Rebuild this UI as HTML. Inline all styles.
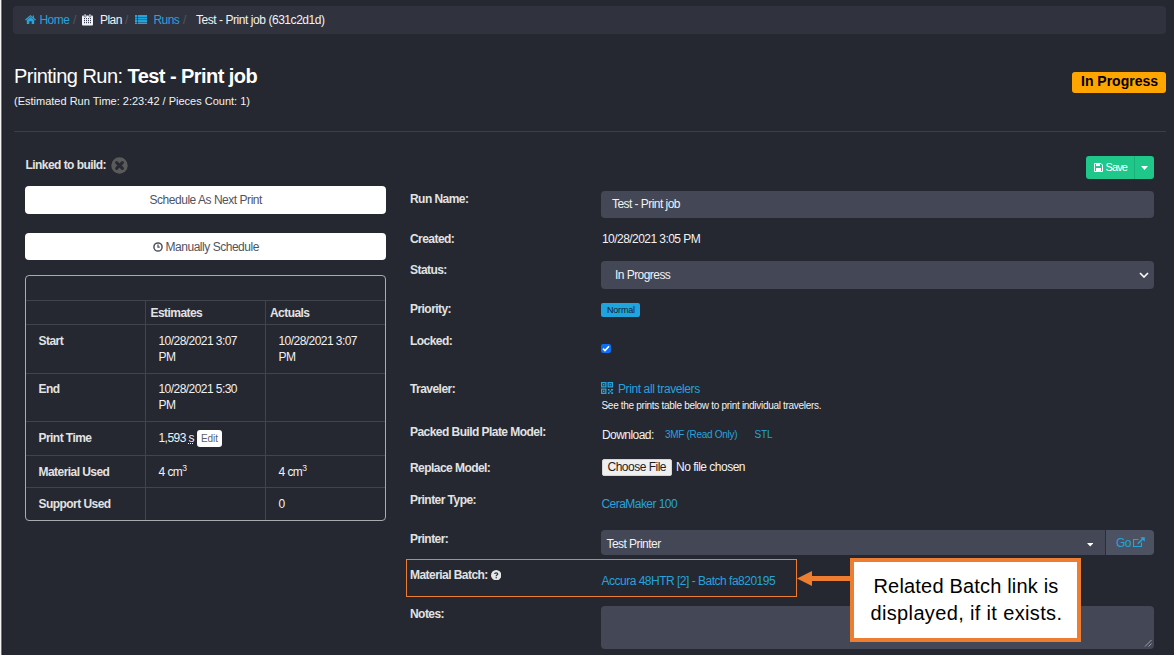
<!DOCTYPE html>
<html><head><meta charset="utf-8"><style>
html,body{margin:0;padding:0;width:1174px;height:655px;overflow:hidden;background:#252831;}
body{position:relative;font-family:"Liberation Sans", sans-serif;}
.t{position:absolute;white-space:nowrap;font-family:"Liberation Sans", sans-serif;}
.r{position:absolute;}
sup{font-size:8.5px;line-height:0;vertical-align:5px;letter-spacing:0;}
b{font-weight:bold;}
</style></head><body>
<div class="r" style="left:0px;top:0px;width:1px;height:655px;background:#f4f4f4;"></div>
<div class="r" style="left:1px;top:0px;width:1px;height:655px;background:#74767c;"></div>
<div class="r" style="left:2px;top:0px;width:1px;height:655px;background:#1f2129;"></div>
<div class="r" style="left:13px;top:6px;width:1153px;height:28px;background:#30333e;border-radius:4px"></div>
<svg class="r" style="left:25px;top:15px" width="11" height="9" viewBox="0 0 11 9"><path d="M5.5 0 L0 4.6 L0.8 5.4 L5.5 1.5 L10.2 5.4 L11 4.6 L9 2.9 L9 0.6 L7.8 0.6 L7.8 1.9 Z M1.8 5 L1.8 9 L4.3 9 L4.3 6.3 L6.7 6.3 L6.7 9 L9.2 9 L9.2 5 L5.5 2 Z" fill="#25a3db"/></svg>
<div class="t" style="left:39.5px;top:14px;font-size:12px;line-height:12px;font-weight:normal;color:#25a3db;letter-spacing:-0.55px;">Home</div>
<div class="t" style="left:73px;top:14px;font-size:12px;line-height:12px;font-weight:normal;color:#50535e;letter-spacing:0px;">/</div>
<svg class="r" style="left:82px;top:14px" width="11" height="11.5" viewBox="0 0 11 11.5"><rect x="0" y="1.6" width="11" height="9.9" rx="1" fill="#f4f4f8"/><g fill="#3b3f52"><rect x="2" y="4" width="1" height="1.2"/><rect x="4" y="4" width="1" height="1.2"/><rect x="6" y="4" width="1" height="1.2"/><rect x="8" y="4" width="1" height="1.2"/><rect x="2" y="6" width="1" height="1.2"/><rect x="4" y="6" width="1" height="1.2"/><rect x="6" y="6" width="1" height="1.2"/><rect x="8" y="6" width="1" height="1.2"/><rect x="2" y="8" width="1" height="1.2"/><rect x="4" y="8" width="1" height="1.2"/><rect x="6" y="8" width="1" height="1.2"/><rect x="8" y="8" width="1" height="1.2"/></g><rect x="2.2" y="0" width="1.8" height="3" rx="0.6" fill="#f4f4f8" stroke="#30333e" stroke-width="0.6"/><rect x="7" y="0" width="1.8" height="3" rx="0.6" fill="#f4f4f8" stroke="#30333e" stroke-width="0.6"/></svg>
<div class="t" style="left:100px;top:14px;font-size:12px;line-height:12px;font-weight:normal;color:#f2f2f2;letter-spacing:-0.55px;">Plan</div>
<div class="t" style="left:125px;top:14px;font-size:12px;line-height:12px;font-weight:normal;color:#50535e;letter-spacing:0px;">/</div>
<svg class="r" style="left:135px;top:14.5px" width="12" height="9.6" viewBox="0 0 12 9.6"><g fill="#25a3db"><rect x="0" y="0" width="2.2" height="2.1"/><rect x="3" y="0" width="9" height="2.1"/><rect x="0" y="2.5" width="2.2" height="2.1"/><rect x="3" y="2.5" width="9" height="2.1"/><rect x="0" y="5" width="2.2" height="2.1"/><rect x="3" y="5" width="9" height="2.1"/><rect x="0" y="7.5" width="2.2" height="2.1"/><rect x="3" y="7.5" width="9" height="2.1"/></g></svg>
<div class="t" style="left:153.5px;top:14px;font-size:12px;line-height:12px;font-weight:normal;color:#25a3db;letter-spacing:-0.55px;">Runs</div>
<div class="t" style="left:183px;top:14px;font-size:12px;line-height:12px;font-weight:normal;color:#50535e;letter-spacing:0px;">/</div>
<div class="t" style="left:196px;top:14px;font-size:12px;line-height:12px;font-weight:normal;color:#f2f2f2;letter-spacing:-0.45px;">Test - Print job (631c2d1d)</div>
<div class="t" style="left:14px;top:66px;font-size:20px;line-height:20px;font-weight:normal;color:#ffffff;letter-spacing:-0.55px;">Printing Run: <b>Test - Print job</b></div>
<div class="t" style="left:14px;top:96px;font-size:11px;line-height:11px;font-weight:normal;color:#f2f2f2;letter-spacing:0px;">(Estimated Run Time: 2:23:42 / Pieces Count: 1)</div>
<div class="r" style="left:1072px;top:72px;width:94px;height:21px;background:#ffa500;border-radius:3px"></div>
<div class="t" style="left:1081px;top:74px;font-size:14px;line-height:14px;font-weight:bold;color:#000;letter-spacing:0px;">In Progress</div>
<div class="r" style="left:14px;top:131px;width:1152px;height:1px;background:#3b3e49;"></div>
<div class="t" style="left:25.5px;top:159px;font-size:12px;line-height:12px;font-weight:bold;color:#e2e2e2;letter-spacing:-0.55px;">Linked to build:</div>
<svg class="r" style="left:111px;top:156.5px" width="17" height="17" viewBox="0 0 17 17"><circle cx="8.5" cy="8.5" r="8.2" fill="#5a5a5a"/><path d="M5.6 5.6 L11.4 11.4 M11.4 5.6 L5.6 11.4" stroke="#272a33" stroke-width="3" stroke-linecap="round"/></svg>
<div class="r" style="left:25px;top:186px;width:361px;height:28px;background:#ffffff;border-radius:4px"></div>
<div class="t" style="left:149.5px;top:194px;font-size:12px;line-height:12px;font-weight:normal;color:#50545f;letter-spacing:-0.47px;">Schedule As Next Print</div>
<div class="r" style="left:25px;top:233px;width:361px;height:27px;background:#ffffff;border-radius:4px"></div>
<svg class="r" style="left:153px;top:241.5px" width="10" height="10" viewBox="0 0 10 10"><circle cx="5" cy="5" r="4.1" fill="none" stroke="#50545f" stroke-width="1.5"/><path d="M5 2.6 V5.2 H6.8" fill="none" stroke="#50545f" stroke-width="1.3"/></svg>
<div class="t" style="left:165.5px;top:241px;font-size:12px;line-height:12px;font-weight:normal;color:#50545f;letter-spacing:-0.47px;">Manually Schedule</div>
<div class="r" style="left:25px;top:275px;width:361px;height:246px;background:none;border:1px solid #a9abb0;border-radius:4px;box-sizing:border-box"></div>
<div class="r" style="left:26px;top:300px;width:359px;height:1px;background:#41444f;"></div>
<div class="r" style="left:26px;top:324px;width:359px;height:1px;background:#41444f;"></div>
<div class="r" style="left:26px;top:373px;width:359px;height:1px;background:#41444f;"></div>
<div class="r" style="left:26px;top:421px;width:359px;height:1px;background:#41444f;"></div>
<div class="r" style="left:26px;top:455px;width:359px;height:1px;background:#41444f;"></div>
<div class="r" style="left:26px;top:487px;width:359px;height:1px;background:#41444f;"></div>
<div class="r" style="left:145px;top:300px;width:1px;height:220px;background:#41444f;"></div>
<div class="r" style="left:265px;top:300px;width:1px;height:220px;background:#41444f;"></div>
<div class="t" style="left:150.5px;top:307px;font-size:12px;line-height:12px;font-weight:bold;color:#e2e2e2;letter-spacing:-0.55px;">Estimates</div>
<div class="t" style="left:270px;top:307px;font-size:12px;line-height:12px;font-weight:bold;color:#e2e2e2;letter-spacing:-0.55px;">Actuals</div>
<div class="t" style="left:38.5px;top:335px;font-size:12px;line-height:12px;font-weight:bold;color:#e2e2e2;letter-spacing:-0.55px;">Start</div>
<div class="t" style="left:158.5px;top:334px;font-size:12px;line-height:12px;font-weight:normal;color:#f2f2f2;letter-spacing:-0.55px;line-height:15.5px">10/28/2021 3:07<br>PM</div>
<div class="t" style="left:278.5px;top:334px;font-size:12px;line-height:12px;font-weight:normal;color:#f2f2f2;letter-spacing:-0.55px;line-height:15.5px">10/28/2021 3:07<br>PM</div>
<div class="t" style="left:38.5px;top:383px;font-size:12px;line-height:12px;font-weight:bold;color:#e2e2e2;letter-spacing:-0.55px;">End</div>
<div class="t" style="left:158.5px;top:382px;font-size:12px;line-height:12px;font-weight:normal;color:#f2f2f2;letter-spacing:-0.55px;line-height:15.5px">10/28/2021 5:30<br>PM</div>
<div class="t" style="left:38.5px;top:432px;font-size:12px;line-height:12px;font-weight:bold;color:#e2e2e2;letter-spacing:-0.55px;">Print Time</div>
<div class="t" style="left:38.5px;top:466px;font-size:12px;line-height:12px;font-weight:bold;color:#e2e2e2;letter-spacing:-0.55px;">Material Used</div>
<div class="t" style="left:158.5px;top:466px;font-size:12px;line-height:12px;font-weight:normal;color:#f2f2f2;letter-spacing:-0.55px;">4 cm<sup>3</sup></div>
<div class="t" style="left:278.5px;top:466px;font-size:12px;line-height:12px;font-weight:normal;color:#f2f2f2;letter-spacing:-0.55px;">4 cm<sup>3</sup></div>
<div class="t" style="left:38.5px;top:498px;font-size:12px;line-height:12px;font-weight:bold;color:#e2e2e2;letter-spacing:-0.55px;">Support Used</div>
<div class="t" style="left:278.5px;top:498px;font-size:12px;line-height:12px;font-weight:normal;color:#f2f2f2;letter-spacing:-0.55px;">0</div>
<div class="t" style="left:158.5px;top:432px;font-size:12px;line-height:12px;font-weight:normal;color:#f2f2f2;letter-spacing:-0.55px;">1,593 <span style="text-decoration:underline dotted;">s</span></div>
<div class="r" style="left:197px;top:430px;width:25px;height:17px;background:#ffffff;border-radius:3px"></div>
<div class="t" style="left:201px;top:434px;font-size:10px;line-height:10px;font-weight:normal;color:#5b5e66;letter-spacing:-0.1px;">Edit</div>
<div class="r" style="left:1086px;top:156px;width:68px;height:23px;background:#1fc78a;border-radius:3px"></div>
<div class="r" style="left:1134px;top:156px;width:1px;height:23px;background:#1ab07a;"></div>
<svg class="r" style="left:1094px;top:163px" width="9" height="9" viewBox="0 0 9 9"><path d="M0.5 0.5 H7 L8.5 2 V8.5 H0.5 Z" fill="none" stroke="#fff" stroke-width="1"/><rect x="2" y="0.5" width="4" height="2.6" fill="#fff"/><rect x="2" y="5" width="5" height="3.5" fill="#fff"/></svg>
<div class="t" style="left:1105.5px;top:162px;font-size:11px;line-height:11px;font-weight:normal;color:#fff;letter-spacing:-0.9px;">Save</div>
<svg class="r" style="left:1141px;top:165.5px" width="7" height="4" viewBox="0 0 7 4"><path d="M0 0 H7 L3.5 4 Z" fill="#fff"/></svg>
<div class="t" style="left:410px;top:193px;font-size:12px;line-height:12px;font-weight:bold;color:#e2e2e2;letter-spacing:-0.55px;">Run Name:</div>
<div class="t" style="left:410px;top:233px;font-size:12px;line-height:12px;font-weight:bold;color:#e2e2e2;letter-spacing:-0.55px;">Created:</div>
<div class="t" style="left:410px;top:264px;font-size:12px;line-height:12px;font-weight:bold;color:#e2e2e2;letter-spacing:-0.55px;">Status:</div>
<div class="t" style="left:410px;top:303px;font-size:12px;line-height:12px;font-weight:bold;color:#e2e2e2;letter-spacing:-0.55px;">Priority:</div>
<div class="t" style="left:410px;top:335px;font-size:12px;line-height:12px;font-weight:bold;color:#e2e2e2;letter-spacing:-0.55px;">Locked:</div>
<div class="t" style="left:410px;top:383px;font-size:12px;line-height:12px;font-weight:bold;color:#e2e2e2;letter-spacing:-0.55px;">Traveler:</div>
<div class="t" style="left:410px;top:426px;font-size:12px;line-height:12px;font-weight:bold;color:#e2e2e2;letter-spacing:-0.55px;">Packed Build Plate Model:</div>
<div class="t" style="left:410px;top:462px;font-size:12px;line-height:12px;font-weight:bold;color:#e2e2e2;letter-spacing:-0.55px;">Replace Model:</div>
<div class="t" style="left:410px;top:494px;font-size:12px;line-height:12px;font-weight:bold;color:#e2e2e2;letter-spacing:-0.55px;">Printer Type:</div>
<div class="t" style="left:410px;top:533px;font-size:12px;line-height:12px;font-weight:bold;color:#e2e2e2;letter-spacing:-0.55px;">Printer:</div>
<div class="t" style="left:410px;top:569px;font-size:12px;line-height:12px;font-weight:bold;color:#e2e2e2;letter-spacing:-0.55px;">Material Batch:</div>
<div class="t" style="left:410px;top:608px;font-size:12px;line-height:12px;font-weight:bold;color:#e2e2e2;letter-spacing:-0.55px;">Notes:</div>
<svg class="r" style="left:491px;top:569.5px" width="10.4" height="10.4" viewBox="0 0 10.4 10.4"><circle cx="5.2" cy="5.2" r="5.2" fill="#e6e6e8"/><path d="M3.7 4 C3.7 2.4 6.7 2.4 6.7 4 C6.7 5.1 5.2 5 5.2 6.2" fill="none" stroke="#30333c" stroke-width="1.3"/><circle cx="5.2" cy="7.7" r="0.75" fill="#30333c"/></svg>
<div class="r" style="left:601px;top:191px;width:553px;height:27px;background:#434756;border-radius:4px"></div>
<div class="t" style="left:612px;top:198px;font-size:12px;line-height:12px;font-weight:normal;color:#f2f2f2;letter-spacing:-0.55px;">Test - Print job</div>
<div class="t" style="left:602px;top:233px;font-size:12px;line-height:12px;font-weight:normal;color:#f2f2f2;letter-spacing:-0.55px;">10/28/2021 3:05 PM</div>
<div class="r" style="left:601px;top:261px;width:553px;height:28px;background:#434756;border-radius:4px"></div>
<div class="t" style="left:615px;top:269px;font-size:12px;line-height:12px;font-weight:normal;color:#f2f2f2;letter-spacing:-0.55px;">In Progress</div>
<svg class="r" style="left:1139px;top:272px" width="10" height="6" viewBox="0 0 10 6"><path d="M1 1 L5 5 L9 1" fill="none" stroke="#fff" stroke-width="1.6"/></svg>
<div class="r" style="left:601px;top:303px;width:39px;height:14px;background:#1ea5dd;border-radius:2px"></div>
<div class="t" style="left:607px;top:306px;font-size:9px;line-height:9px;font-weight:normal;color:#141c2a;letter-spacing:-0.2px;">Normal</div>
<div class="r" style="left:601px;top:344px;width:10px;height:9px;background:#0e6ef4;border-radius:2px"></div>
<svg class="r" style="left:602px;top:345px" width="8" height="7" viewBox="0 0 8 7"><path d="M1 3.6 L3 5.6 L7 1.2" fill="none" stroke="#fff" stroke-width="1.6"/></svg>
<svg class="r" style="left:601px;top:382px" width="12" height="12" viewBox="0 0 12 12"><g fill="none" stroke="#25a3db" stroke-width="1.3"><rect x="0.65" y="0.65" width="4.2" height="4.2"/><rect x="7.15" y="0.65" width="4.2" height="4.2"/><rect x="0.65" y="7.15" width="4.2" height="4.2"/></g><g fill="#25a3db"><rect x="2" y="2" width="1.5" height="1.5"/><rect x="8.5" y="2" width="1.5" height="1.5"/><rect x="2" y="8.5" width="1.5" height="1.5"/><rect x="7" y="7" width="1.6" height="1.6"/><rect x="10" y="7" width="2" height="1.6"/><rect x="8.6" y="8.6" width="1.6" height="1.6"/><rect x="7" y="10.2" width="1.6" height="1.8"/><rect x="10.2" y="10.2" width="1.8" height="1.8"/></g></svg>
<div class="t" style="left:618px;top:383px;font-size:12px;line-height:12px;font-weight:normal;color:#25a3db;letter-spacing:-0.4px;">Print all travelers</div>
<div class="t" style="left:601.5px;top:401px;font-size:10px;line-height:10px;font-weight:normal;color:#f2f2f2;letter-spacing:-0.3px;">See the prints table below to print individual travelers.</div>
<div class="t" style="left:602px;top:429px;font-size:12px;line-height:12px;font-weight:normal;color:#f2f2f2;letter-spacing:-0.55px;">Download:</div>
<div class="t" style="left:665px;top:430px;font-size:10px;line-height:10px;font-weight:normal;color:#25a3db;letter-spacing:-0.3px;">3MF (Read Only)</div>
<div class="t" style="left:754.5px;top:430px;font-size:10px;line-height:10px;font-weight:normal;color:#25a3db;letter-spacing:-0.2px;">STL</div>
<div class="r" style="left:602px;top:459px;width:70px;height:17px;background:#efefef;border:1px solid #d6d6d6;border-radius:2px;box-sizing:border-box"></div>
<div class="t" style="left:607.5px;top:461px;font-size:12px;line-height:12px;font-weight:normal;color:#1e1e1e;letter-spacing:-0.5px;">Choose File</div>
<div class="t" style="left:676px;top:461px;font-size:12px;line-height:12px;font-weight:normal;color:#f2f2f2;letter-spacing:-0.5px;">No file chosen</div>
<div class="t" style="left:601.5px;top:498px;font-size:12px;line-height:12px;font-weight:normal;color:#25a3db;letter-spacing:-0.55px;">CeraMaker 100</div>
<div class="r" style="left:601px;top:530px;width:505px;height:25px;background:#434756;border-radius:4px 0 0 4px"></div>
<div class="r" style="left:1106px;top:530px;width:48px;height:25px;background:#4d5263;border-radius:0 4px 4px 0"></div>
<div class="r" style="left:1105px;top:530px;width:1px;height:25px;background:#2b2e38;"></div>
<div class="t" style="left:606.5px;top:538px;font-size:12px;line-height:12px;font-weight:normal;color:#f2f2f2;letter-spacing:-0.55px;">Test Printer</div>
<svg class="r" style="left:1087px;top:543px" width="6.4" height="3.6" viewBox="0 0 6.4 3.6"><path d="M0 0 H6.4 L3.2 3.6 Z" fill="#fff"/></svg>
<div class="t" style="left:1116px;top:537px;font-size:12px;line-height:12px;font-weight:normal;color:#25a3db;letter-spacing:-0.55px;">Go</div>
<svg class="r" style="left:1133px;top:537px" width="12" height="11" viewBox="0 0 12 11"><path d="M8.5 5.5 V9.5 H0.5 V2.5 H5.5" fill="none" stroke="#25a3db" stroke-width="1.1"/><path d="M4.8 6.8 L10.5 1.1" stroke="#25a3db" stroke-width="1.5"/><path d="M7.2 0.2 H11.8 V4.8 Z" fill="#25a3db"/></svg>
<div class="t" style="left:601.5px;top:575px;font-size:12px;line-height:12px;font-weight:normal;color:#25a3db;letter-spacing:-0.5px;">Accura 48HTR [2] - Batch fa820195</div>
<div class="r" style="left:601px;top:606px;width:553px;height:43px;background:#434756;border-radius:4px"></div>
<svg class="r" style="left:1144px;top:639px" width="8" height="8" viewBox="0 0 8 8"><path d="M7.5 1 L1 7.5 M7.5 4.5 L4.5 7.5" stroke="#a0a3ad" stroke-width="1"/></svg>
<div class="r" style="left:406px;top:559px;width:391px;height:38px;background:none;border:1.5px solid #ed7d31;box-sizing:border-box"></div>
<svg class="r" style="left:796px;top:569px" width="56" height="20" viewBox="0 0 56 20"><path d="M1 9.5 L16 2 L16 7 L55 7 L55 12 L16 12 L16 17 Z" fill="#ed7d31"/></svg>
<div class="r" style="left:850px;top:558px;width:231px;height:84px;background:#ffffff;border:4px solid #ed7d31;box-sizing:border-box"></div>
<div class="t" style="left:873.5px;top:576px;font-size:20px;line-height:20px;font-weight:normal;color:#000;letter-spacing:0.18px;">Related Batch link is</div>
<div class="t" style="left:870.5px;top:603px;font-size:20px;line-height:20px;font-weight:normal;color:#000;letter-spacing:0.35px;">displayed, if it exists.</div>
</body></html>
